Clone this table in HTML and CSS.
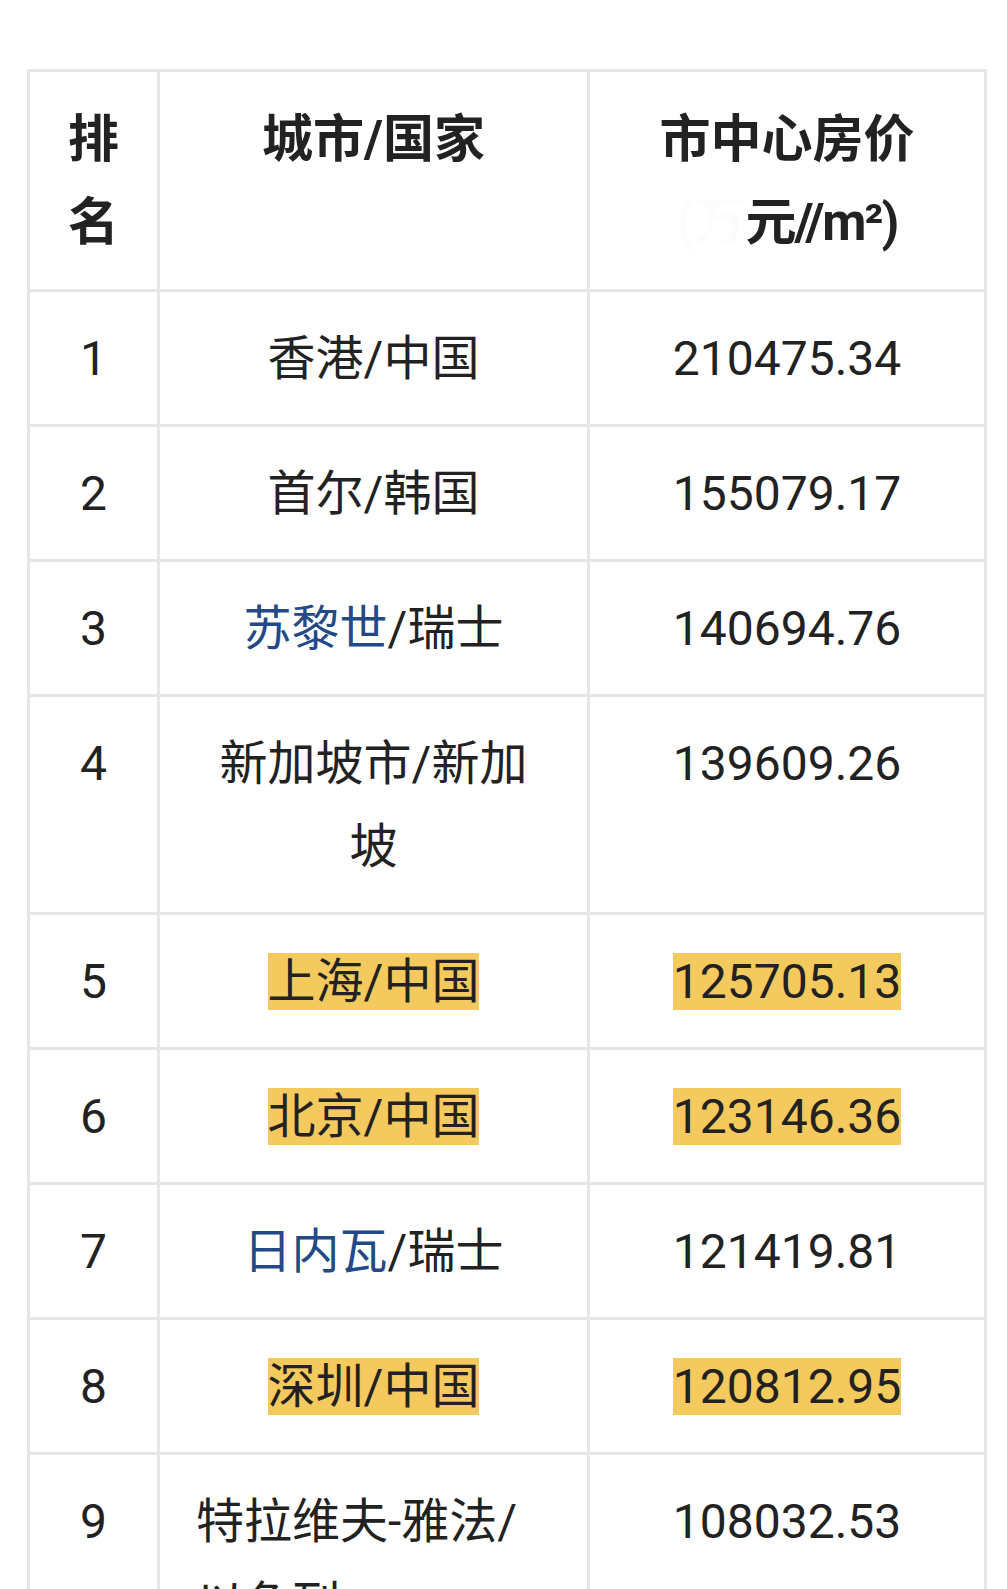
FILE: index.html
```html
<!DOCTYPE html>
<html lang="zh-CN">
<head>
<meta charset="utf-8">
<title>市中心房价排名</title>
<link rel="stylesheet" href="styles.css">
</head>
<body>
<table class="rank">
  <colgroup>
    <col class="c1">
    <col class="c2">
    <col class="c3">
  </colgroup>
  <thead>
    <tr>
      <th class="n">排名</th>
      <th>城市/国家</th>
      <th>市中心房价<span class="erased">(万</span><span class="unit">元//m²)</span></th>
    </tr>
  </thead>
  <tbody>
    <tr><td class="n">1</td><td>香港/中国</td><td>210475.34</td></tr>
    <tr><td class="n">2</td><td>首尔/韩国</td><td>155079.17</td></tr>
    <tr><td class="n">3</td><td><span class="link">苏黎世</span>/瑞士</td><td>140694.76</td></tr>
    <tr><td class="n">4</td><td>新加坡市/新加坡</td><td>139609.26</td></tr>
    <tr><td class="n">5</td><td><span class="hl">上海/中国</span></td><td><span class="hl">125705.13</span></td></tr>
    <tr><td class="n">6</td><td><span class="hl">北京/中国</span></td><td><span class="hl">123146.36</span></td></tr>
    <tr><td class="n">7</td><td><span class="link">日内瓦</span>/瑞士</td><td>121419.81</td></tr>
    <tr><td class="n">8</td><td><span class="hl">深圳/中国</span></td><td><span class="hl">120812.95</span></td></tr>
    <tr><td class="n">9</td><td class="left">特拉维夫-雅法/以色列</td><td>108032.53</td></tr>
  </tbody>
</table>
</body>
</html>
```

FILE: styles.css
```css
html, body {
  margin: 0;
  padding: 0;
  background: #ffffff;
}

html {
  overflow: hidden;
}

body {
  padding: 69px 0 0 27px;
  font-family: Roboto, "Noto Sans CJK SC", sans-serif;
  color: #222222;
}

.rank {
  width: 957px;
  table-layout: fixed;
  border-collapse: collapse;
  font-size: 48px;
  line-height: 83px;
}

.c1 { width: 130px; }
.c2 { width: 430px; }
.c3 { width: 397px; }

.rank th,
.rank td {
  border: 3px solid #e6e6e6;
  padding: 25px 40px 24px;
  text-align: center;
  vertical-align: top;
}

.rank th {
  font-size: 51px;
  font-weight: 700;
  padding-top: 26px;
  padding-bottom: 25px;
}

.rank .n {
  padding-left: 18px;
  padding-right: 18px;
}

.rank td.left {
  text-align: left;
  padding-left: 36px;
}

.erased {
  color: #fcfcfc;
}

.unit {
  letter-spacing: -2px;
}

.link {
  color: #234a86;
}

.hl {
  background: #f4c95d;
}
```
